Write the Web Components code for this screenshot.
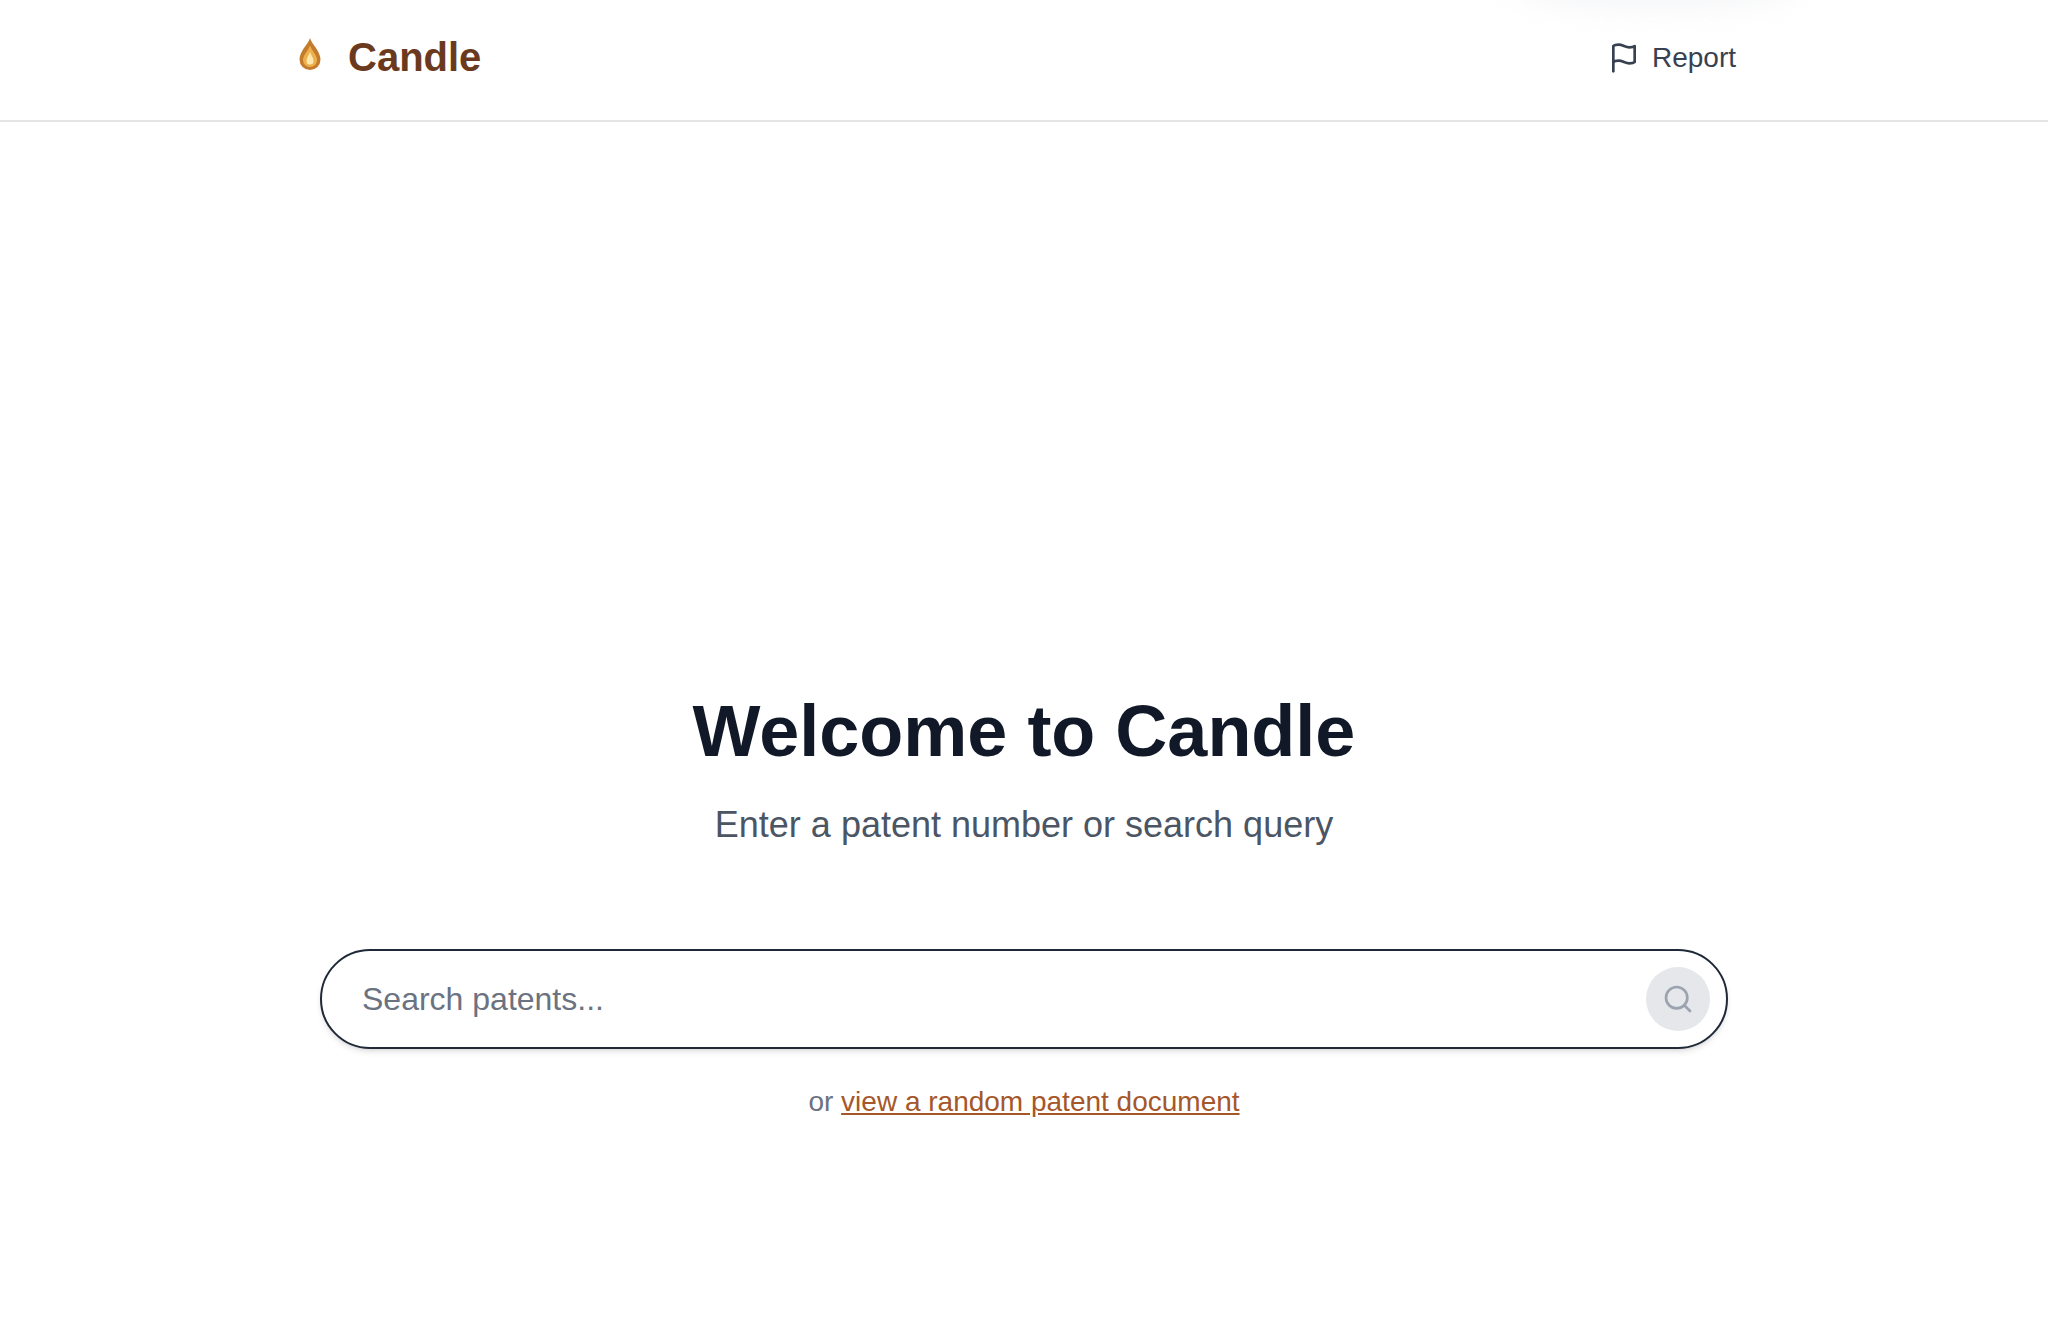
<!DOCTYPE html>
<html lang="en"><head><meta charset="utf-8"><title>Candle</title>
<style>
html,body{margin:0;height:100%;background:#fff;font-family:"Liberation Sans",Arial,sans-serif}
body{display:flex;flex-direction:column;height:1343px;overflow:hidden}
</style></head><body>
<candle-header></candle-header>
<candle-home>
  <h1 slot="title">Welcome to Candle</h1>
  <span slot="subtitle">Enter a patent number or search query</span>
</candle-home>
<script>
class CandleHeader extends HTMLElement{constructor(){super();this.attachShadow({mode:'open'}).innerHTML=`<style>
:host{display:flex;flex:none;height:114px;border-bottom:2px solid #e5e5e5;box-sizing:content-box;justify-content:space-between;align-items:center;padding:0 312px 6px 294px;position:relative;overflow:hidden;color:#374151}
.brand{display:flex;align-items:center;gap:22px;font-weight:700;font-size:40px;color:#6b3a1e;line-height:1}
.brand svg{width:32px;height:40px;display:block}
.report{display:flex;align-items:center;gap:12px;font-size:28px;padding-top:2px}
.report svg{width:32px;height:32px;display:block}
.glow{position:absolute;left:1510px;top:-40px;width:290px;height:50px;border-radius:50%;background:#f3f4f6;filter:blur(14px);opacity:.8}
</style>
<div class="glow"></div>
<div class="brand"><svg viewBox="0 0 32 40"><path d="M16 1C14.500 7 5.500 14 5.500 22.500a10.500 10.500 0 0 0 21 0C26.500 14 17.500 7 16 1Z" fill="#c27c2c"/><path d="M16 8.500C14 14 9 18 9 23a7 7 0 0 0 14 0C23 18 18 14 16 8.500Z" fill="#eeb04d"/><path d="M16 15C15 18 12.500 21 12.500 24a3.500 3.500 0 0 0 7 0C19.500 21 17 18 16 15Z" fill="#fde8b0"/></svg><span>Candle</span></div>
<div class="report"><svg viewBox="0 0 24 24" fill="none" stroke="currentColor" stroke-width="2" stroke-linecap="round" stroke-linejoin="round"><path d="M4 15s1-1 4-1 5 2 8 2 4-1 4-1V3s-1 1-4 1-5-2-8-2-4 1-4 1z"/><path d="M4 22v-7"/></svg><span>Report</span></div>`}}
customElements.define('candle-header',CandleHeader);

class CandleSearch extends HTMLElement{constructor(){super();this.attachShadow({mode:'open'}).innerHTML=`<style>
:host{display:flex;box-sizing:border-box;width:1408px;height:100px;border:2px solid #1f2937;border-radius:50px;align-items:center;justify-content:space-between;padding:0 16px 0 40px;background:#fff;box-shadow:0 4px 6px -1px rgba(0,0,0,.1),0 2px 4px -2px rgba(0,0,0,.1)}
.ph{font-size:32px;color:#6b7280}
.btn{width:64px;height:64px;border-radius:50%;background:#e5e7eb;display:flex;align-items:center;justify-content:center;color:#9ca3af}
svg{width:32px;height:32px;display:block}
</style><span class="ph">Search patents...</span><div class="btn"><svg viewBox="0 0 24 24" fill="none" stroke="currentColor" stroke-width="2" stroke-linecap="round" stroke-linejoin="round"><circle cx="11" cy="11" r="8"/><path d="m21 21-4.300-4.300"/></svg></div>`}}
customElements.define('candle-search',CandleSearch);

class CandleHome extends HTMLElement{constructor(){super();this.attachShadow({mode:'open'}).innerHTML=`<style>
:host{display:flex;flex-direction:column;align-items:center;flex:1;padding-top:569px}
::slotted(h1){margin:0;font-size:72px;line-height:80px;font-weight:700;color:#111827;letter-spacing:0}
.sub{font-size:36px;line-height:44px;color:#4b5563;margin-top:32px;margin-bottom:0}
candle-search{margin-top:102px}
.alt{margin-top:35px;font-size:28px;line-height:36px;color:#6b7280}
a{color:#a5572a;text-decoration:underline}
</style><slot name="title"></slot><div class="sub"><slot name="subtitle"></slot></div><candle-search></candle-search><div class="alt">or <a href="#">view a random patent document</a></div>`}}
customElements.define('candle-home',CandleHome);
</script></body></html>
